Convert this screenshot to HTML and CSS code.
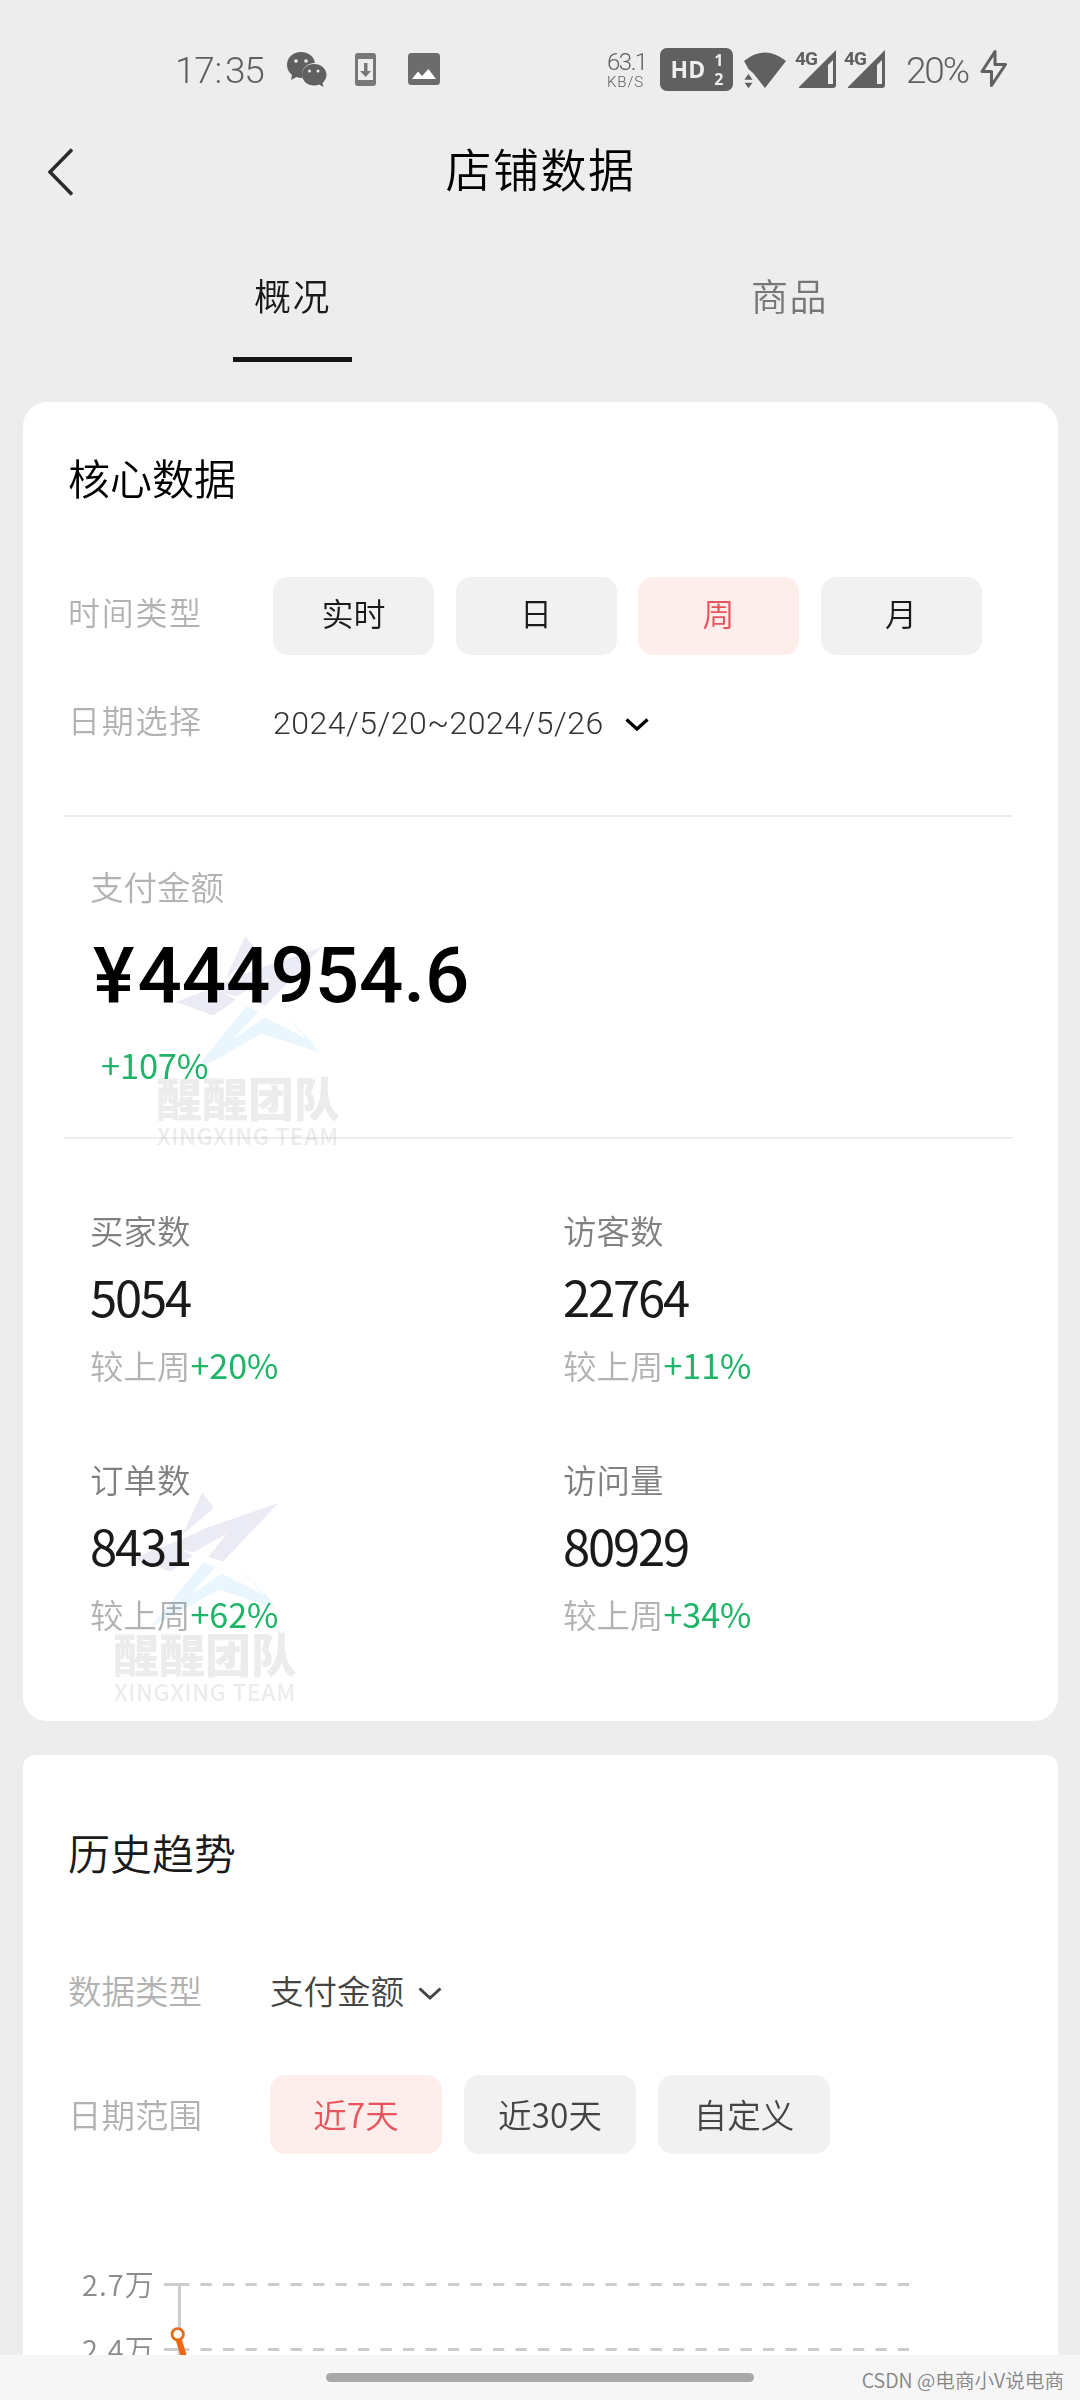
FILE: index.html
```html
<!DOCTYPE html>
<html lang="zh-CN">
<head>
<meta charset="utf-8">
<title>店铺数据</title>
<link rel="stylesheet" href="styles.css">
</head>
<body>
<svg class="defs" width="0" height="0">
  <defs>
    <symbol id="brand" viewBox="0 0 182 136">
      <path fill="#ebebf5" d="M88.400 0L99 15L97.700 18L68.500 42.500ZM164.500 11L109 69.400L94.300 65L112.500 42L79 60.500L66 57L68.500 47L92 36ZM19 66L68.500 47L66 57L79 63.500L58 78.500Q54 80 47 76Z"/>
      <path fill="#eaf6fd" d="M89.500 70L101 75.500L76.400 103L108 81.600L150 103L124 75L154 105L161 116L104.600 97.600L60 123L37 134.500Z"/>
    </symbol>
  </defs>
</svg>
<div class="screen">
  <header class="status">
    <span class="clock">17<i>:</i>35</span>
    <svg class="wechat" width="40" height="36" viewBox="0 0 40 36">
      <path d="M14 0C6 0 0 5.500 0 13C0 17.500 2 20.500 5 23L4 28L9.500 25Q12 26 15.500 26C13 17 20 11 28 11C27 4 21 0 14 0Z"/>
      <path d="M27 12C20 12 15 17 15 22.500C15 29 20.500 33.500 27 33.500Q30 33.500 32 32.600L36.500 35L35.500 31Q39.500 27.500 39.500 22.500C39 16.500 34 12 27 12Z"/>
      <g fill="#ededed"><circle cx="9" cy="9" r="1.800"/><circle cx="19" cy="9" r="1.800"/><circle cx="22.500" cy="19" r="1.500"/><circle cx="31" cy="19" r="1.500"/></g>
    </svg>
    <svg class="phone" width="22" height="34" viewBox="0 0 22 34">
      <path fill="#777" fill-rule="evenodd" d="M3 0H18Q21 0 21 3V30Q21 33 18 33H3Q0 33 0 30V3Q0 0 3 0ZM3 6V27H18V6Z"/>
      <path fill="#777" d="M9 10H12.500V18H16L10.700 24L5 18H9Z"/>
    </svg>
    <svg class="photo" width="32" height="33" viewBox="0 0 32 33">
      <rect width="32" height="32" rx="3.500" fill="#6c6c6c"/>
      <path fill="#fff" d="M4 26L10 18.500L14 23L20.500 16L28 26Z"/>
    </svg>
    <span class="speed"><b>63.1</b><small>KB/S</small></span>
    <span class="hd"><b>HD</b><small>1<br>2</small></span>
    <svg class="wifi" width="43" height="38" viewBox="0 0 43 38">
      <path d="M0 9Q21 -8 42 9L21 36L9.500 21.500L4.500 17Z"/>
      <path stroke="#ededed" stroke-width="1.500" d="M-1 28.500L4.500 20.500L10 28.500ZM-1 30L4.500 37.500L10 30Z"/>
    </svg>
    <span class="signal"><b>4G</b><svg width="37" height="38" viewBox="0 0 37 38"><path fill-rule="evenodd" d="M0 37L37 0V35Q37 38 34 38H0ZM29 15V34H34V10Z"/></svg></span>
    <span class="signal"><b>4G</b><svg width="37" height="38" viewBox="0 0 37 38"><path fill-rule="evenodd" d="M0 37L37 0V35Q37 38 34 38H0ZM29 15V34H34V10Z"/></svg></span>
    <span class="battery">20%</span>
    <svg class="bolt" width="28" height="40" viewBox="0 0 28 40">
      <path fill="none" stroke="#606060" stroke-width="3" stroke-linejoin="round" d="M15 2.500L2 22.500H11.500V36.500L25.500 15.500H15Z"/>
    </svg>
  </header>

  <nav class="titlebar">
    <svg class="back" width="26" height="48" viewBox="0 0 26 48"><path fill="none" stroke="#2b2b2b" stroke-width="3.500" d="M24 1.500L2 24L24 46.500"/></svg>
    <h1>店铺数据</h1>
  </nav>

  <div class="tabs">
    <span class="tab active">概况</span>
    <span class="tab">商品</span>
  </div>

  <section class="card core">
    <h2>核心数据</h2>
    <div class="row types">
      <span class="label">时间类型</span>
      <div class="chips">
        <span class="chip">实时</span><span class="chip">日</span><span class="chip on">周</span><span class="chip">月</span>
      </div>
    </div>
    <div class="row dates">
      <span class="label">日期选择</span>
      <span class="date">2024/5/20~2024/5/26</span>
      <svg width="24" height="16" viewBox="0 0 24 16"><path fill="none" stroke="#000" stroke-width="3.300" d="M1.500 2.500L12 12L22.500 2.500"/></svg>
    </div>
    <div class="amount">
      <div class="name">支付金额</div>
      <div class="money"><span class="yen">¥</span>444954.6</div>
      <div class="rate">+107%</div>
    </div>
    <div class="stats">
      <div class="stat"><span>买家数</span><strong>5054</strong><em>较上周<b>+20%</b></em></div>
      <div class="stat"><span>访客数</span><strong>22764</strong><em>较上周<b>+11%</b></em></div>
      <div class="stat"><span>订单数</span><strong>8431</strong><em>较上周<b>+62%</b></em></div>
      <div class="stat"><span>访问量</span><strong>80929</strong><em>较上周<b>+34%</b></em></div>
    </div>
    <div class="mark first"><svg width="182" height="136"><use href="#brand"/></svg><b>醒醒团队</b><small>XINGXING TEAM</small></div>
    <div class="mark second"><svg width="182" height="136"><use href="#brand"/></svg><b>醒醒团队</b><small>XINGXING TEAM</small></div>
  </section>

  <section class="card trend">
    <h2>历史趋势</h2>
    <div class="row kind">
      <span class="label">数据类型</span>
      <span class="picked">支付金额</span>
      <svg width="24" height="16" viewBox="0 0 24 16"><path fill="none" stroke="#444" stroke-width="3" d="M1.500 2.500L12 12L22.500 2.500"/></svg>
    </div>
    <div class="row range">
      <span class="label">日期范围</span>
      <div class="chips">
        <span class="chip on">近7天</span><span class="chip">近30天</span><span class="chip">自定义</span>
      </div>
    </div>
    <div class="chart">
      <div class="axis"><span>2.7万</span><span>2.4万</span></div>
      <svg width="760" height="95" viewBox="0 0 760 95">
        <g stroke="#ccc" stroke-width="3" fill="none">
          <path d="M4 24.500H19M4 89.500H19M19.500 23V95"/>
          <path stroke-dasharray="11.300 11.200" d="M18 24.500H749M18 89.500H749"/>
        </g>
        <path stroke="#f2660f" stroke-width="6" d="M18.500 79L25 100"/>
        <circle cx="17.700" cy="74.300" r="5.700" fill="#fff" stroke="#e06c1c" stroke-width="2.800"/>
      </svg>
    </div>
  </section>

  <footer class="bottom">
    <span class="home"></span>
    <span class="credit">CSDN @电商小V说电商</span>
  </footer>
</div>
</body>
</html>
```

FILE: styles.css
```css
* { box-sizing: border-box; }
body {
  margin: 0;
  background: #ededed;
  font-family: "Noto Sans CJK SC", sans-serif;
  font-weight: 350;
}
i, em { font-style: normal; }
.defs { display: none; }
.screen {
  width: 1080px;
  height: 2400px;
  overflow: hidden;
  display: flex;
  flex-direction: column;
}

.status {
  height: 140px;
  padding: 48px 0 0 175px;
  display: flex;
  align-items: flex-start;
  color: #606060;
  fill: #606060;
  font-family: Roboto, sans-serif;
}
.status svg { flex: none; }
.clock { width: 112px; font-size: 37px; line-height: 45px; letter-spacing: -1.300px; white-space: nowrap; }
.clock i { margin: 0 4px 0 1px; }
.wechat { margin-top: 4px; }
.phone { margin: 5px 0 0 28px; }
.photo { margin: 5px 0 0 31px; }
.speed { width: 53px; margin-left: 167px; padding-top: 3px; display: flex; flex-direction: column; }
.speed b { font-weight: 300; font-size: 24px; line-height: 22px; letter-spacing: -1.500px; }
.speed small { font-size: 15px; line-height: 18px; letter-spacing: .9px; }
.hd { width: 73px; height: 43px; border-radius: 7px; background: #606060; color: #ededed; display: flex; justify-content: center; align-items: center; gap: 9px; padding-left: 1px; }
.hd b { font: 700 23px/43px "Open Sans", sans-serif; }
.hd small { font: 700 16px/19px "Open Sans", sans-serif; }
.wifi { margin: 4px 0 0 11px; }
.signal { width: 37px; height: 40px; position: relative; margin: 2px 0 0 12px; }
.signal b { position: absolute; left: -4px; top: 0; font: 700 19px/18px Roboto, sans-serif; letter-spacing: -1px; }
.battery { width: 73px; margin-left: 21px; font-size: 37px; line-height: 45px; letter-spacing: -2.200px; }
.bolt { margin: 1px 0 0 1px; }

.titlebar { height: 100px; display: grid; grid-template-columns: 120px 1fr 120px; }
.back { margin: 8px 0 0 48px; }
.titlebar h1 { margin: 0; padding-left: 1px; text-align: center; font-weight: 350; font-size: 46px; line-height: 54px; letter-spacing: 1.500px; color: #000; }

.tabs { height: 162px; display: flex; padding: 28px 42px 0 44px; }
.tab { flex: 1; height: 95px; display: flex; flex-direction: column; align-items: center; font-size: 37px; line-height: 54px; letter-spacing: 1.500px; color: #777; }
.tab.active { color: #1a1a1a; }
.tab.active::after { content: ""; width: 119px; height: 5px; margin-top: 35px; background: #161616; }

.card { position: relative; width: 1035px; margin-left: 23px; background: #fff; padding: 0 46px 0 45px; }
.card h2 { margin: 0; font-weight: 350; font-size: 42px; line-height: 50px; color: #000; }
.row { display: flex; align-items: center; }
.label { color: #b2b2b2; font-size: 33.500px; width: 205px; }
.chips { display: flex; gap: 22px; }
.chip { width: 161px; height: 78px; border-radius: 15px; background: #f1f1f1; color: #1a1a1a; font-size: 32px; line-height: 70px; text-align: center; }
.chip.on { background: #fdeeeb; color: #e8545c; }

.core { height: 1319px; flex: none; border-radius: 24px; padding-top: 50px; }
.types { margin-top: 75px; height: 78px; }
.types .chips { gap: 21.500px; }
.types .label, .dates .label { font-size: 32px; letter-spacing: 1.700px; line-height: 69px; }
.types .label { height: 78px; }
.dates { height: 70px; margin-top: 30px; padding-bottom: 2px; }
.date { width: 352px; padding-top: 7px; font-family: Roboto, sans-serif; font-size: 32px; letter-spacing: .5px; font-weight: 300; color: #333; white-space: nowrap; }
.dates svg { margin-top: 12px; }
.amount { border-top: 2px solid #eee; border-bottom: 2px solid #eee; height: 324px; margin: 60px -1px 0 -4px; padding: 44px 0 0 26px; }
.name { font-size: 33.500px; line-height: 50px; color: #b2b2b2; }
.money { font: 500 78px/90px Roboto, sans-serif; letter-spacing: 0; color: #000; margin-top: 20px; padding-left: 3px; }
.yen { margin-right: 3px; }
.rate { padding-left: 11px; margin-top: 18px; font-size: 34.500px; line-height: 50px; font-weight: 400; letter-spacing: -.2px; color: #1fb467; }
.stats { display: grid; grid-template-columns: 473px 1fr; grid-auto-rows: 249px; padding: 66px 0 0 22px; }
.stat { display: flex; flex-direction: column; color: #808080; font-size: 33.500px; line-height: 50px; }
.stat strong { font-weight: 400; font-size: 49px; line-height: 60px; letter-spacing: -2.200px; color: #1a1a1a; margin-top: 11px; }
.stat em { color: #b2b2b2; margin-top: 14px; }
.stat em b { font-weight: 400; font-size: 34px; color: #1fb467; }

.mark { position: absolute; width: 184px; display: flex; flex-direction: column; mix-blend-mode: multiply; color: #ececec; white-space: nowrap; }
.mark b { font-weight: 900; font-size: 46px; line-height: 54px; margin: -3px 0 0 -1px; }
.mark small { font-size: 23px; line-height: 24px; font-weight: 500; letter-spacing: .6px; }
.first { left: 134px; top: 534px; }
.second { left: 91px; top: 1090px; }

.trend { height: 600px; flex: none; margin-top: 34px; border-radius: 12px 12px 0 0; padding-top: 72px; }
.trend h2 { color: #1a1a1a; }
.kind { margin-top: 85px; height: 54px; }
.kind .label, .range .label { width: 202px; }
.picked { width: 148px; font-size: 33.500px; color: #444; }
.kind svg { margin-top: 9px; }
.range { margin-top: 59px; height: 79px; }
.range .label { padding-bottom: 3px; }
.range .chip { width: 172px; height: 79px; font-size: 33.500px; line-height: 77px; color: #444; }
.range .chip.on { color: #e8545c; }
.chart { display: flex; margin-top: 106px; }
.axis { width: 92px; padding: 7px 0 0 14px; display: flex; flex-direction: column; font-size: 29px; line-height: 32px; gap: 33px; color: #8c8c8c; }
.axis span { letter-spacing: 1px; }

.bottom { position: relative; height: 45px; flex: none; background: #f6f6f6; padding: 18px 0 0 326px; }
.home { display: block; width: 428px; height: 9px; border-radius: 5px; background: #a8a8a8; }
.credit { position: absolute; right: 16px; top: 10px; font-size: 19.600px; line-height: 30px; color: #858585; }
```
